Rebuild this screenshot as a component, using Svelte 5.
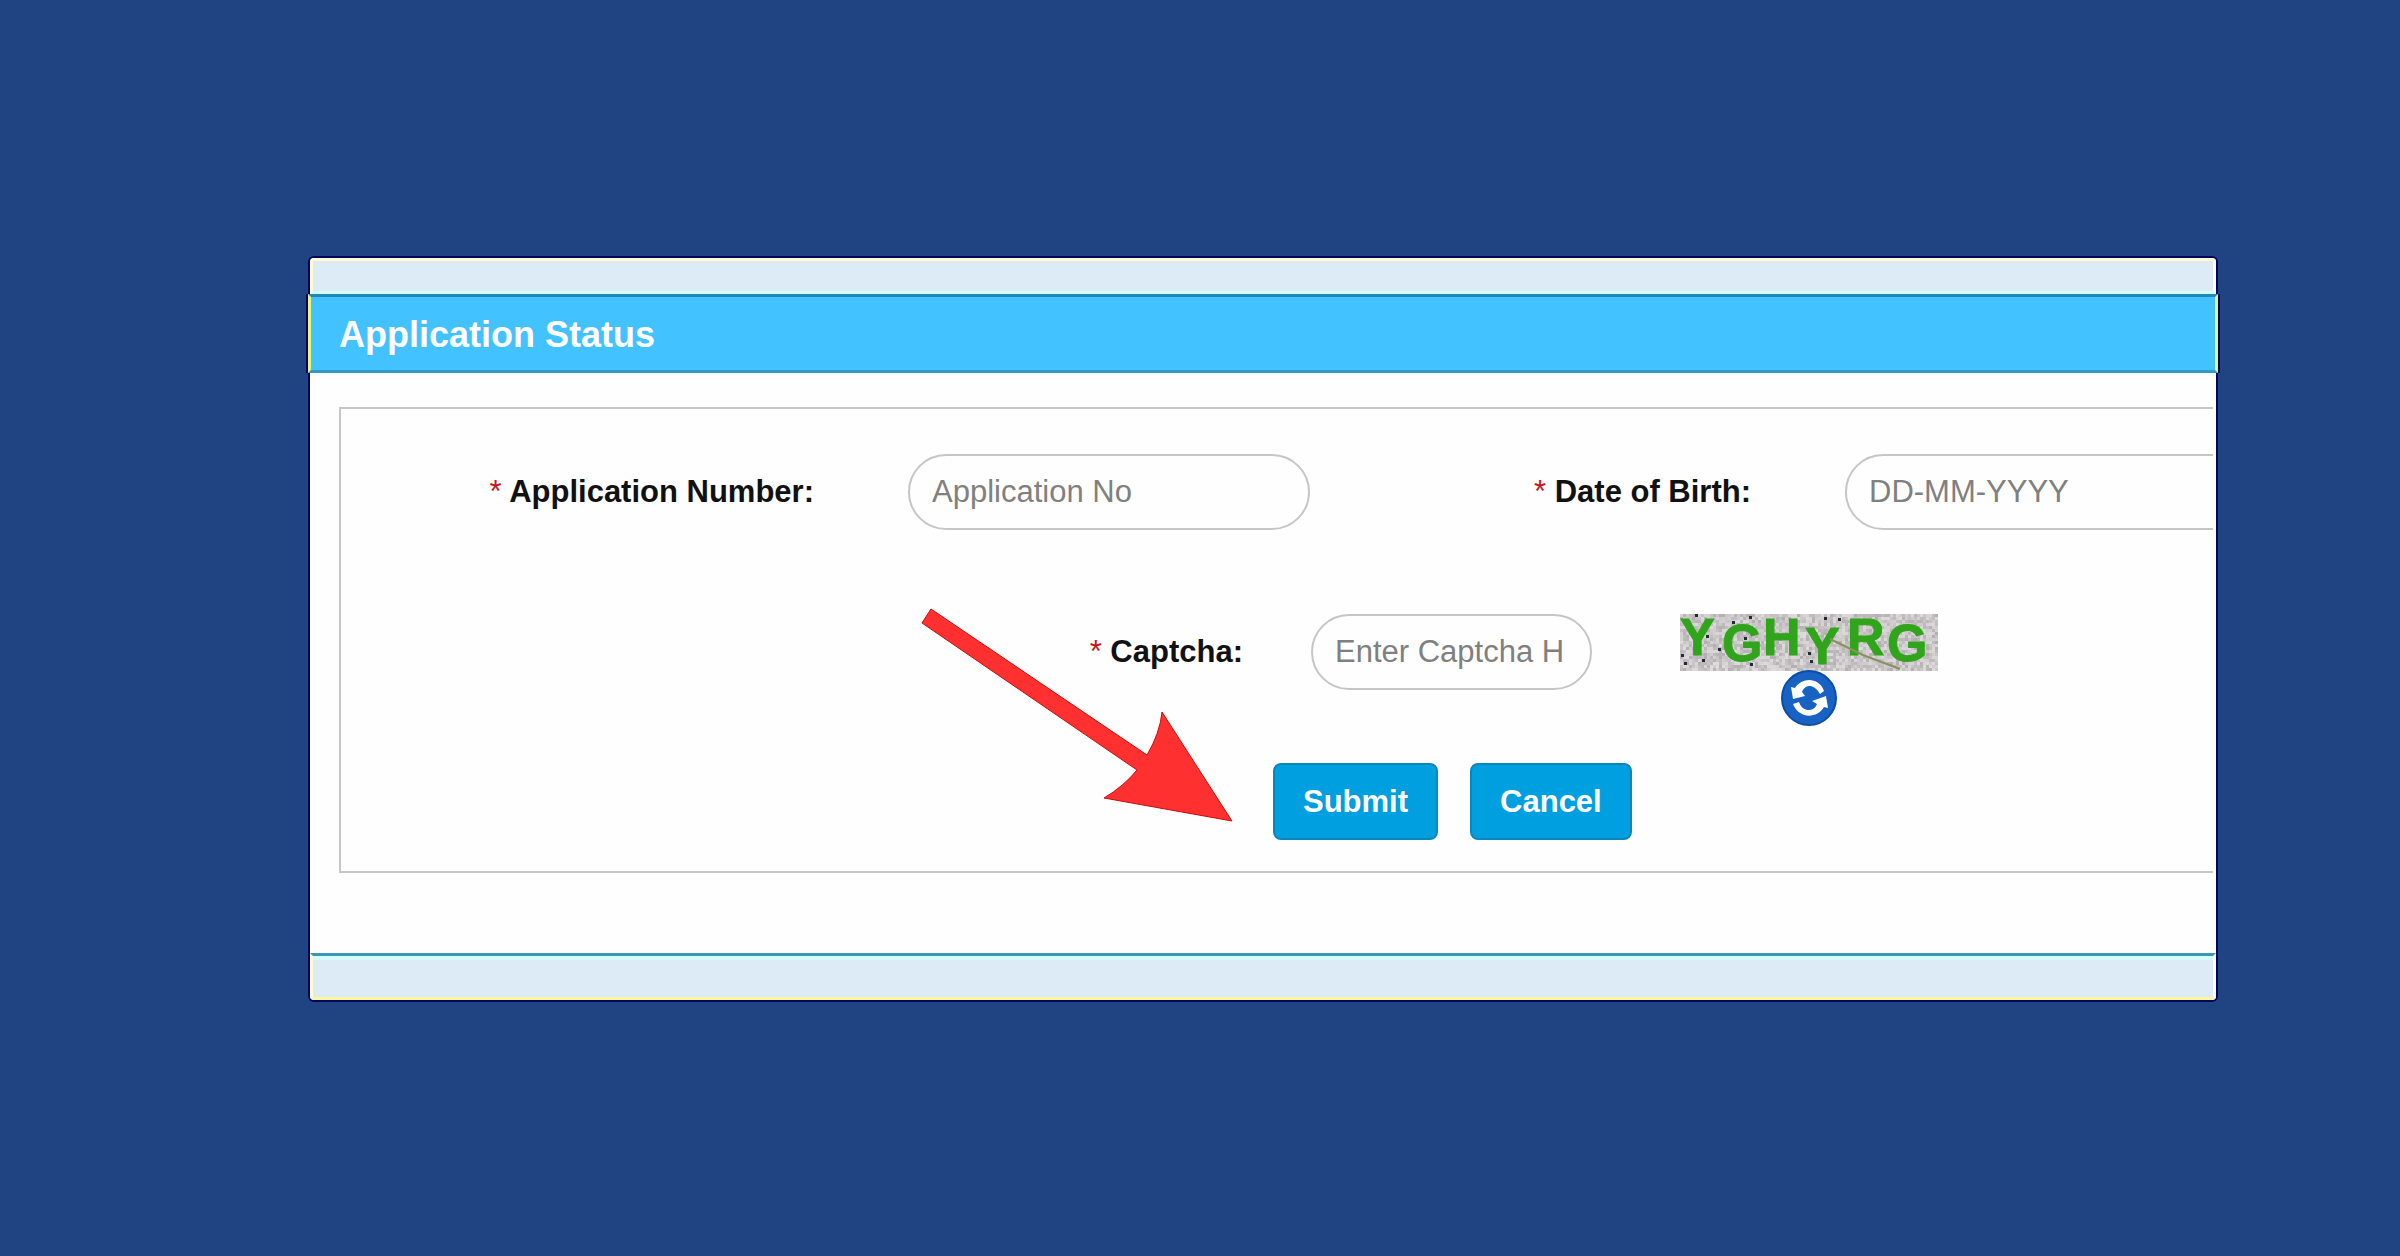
<script lang="ts">
	interface Glyph {
		char: string;
		x: number;
		y: number;
	}

	let applicationNo = $state('');
	let birthDate = $state('');
	let captcha = $state('');
	let seed = $state(7);

	const glyphs: Glyph[] = [
		{ char: 'Y', x: 0, y: 41 },
		{ char: 'G', x: 42, y: 47 },
		{ char: 'H', x: 83, y: 41 },
		{ char: 'Y', x: 125, y: 50 },
		{ char: 'R', x: 167, y: 41 },
		{ char: 'G', x: 207, y: 47 }
	];

	const specks = [
		[15, 0], [69, 2], [26, 21], [64, 23], [38, 34], [1, 40], [22, 45], [4, 48],
		[70, 49], [52, 7], [128, 38], [130, 46], [158, 4], [144, 3]
	];

	const cell = 3;

	// background grain of the captcha
	function makeGrain(start: number) {
		let n = start;
		const cells = [];
		for (let y = 0; y < 56; y += cell) {
			for (let x = 0; x < 258; x += cell) {
				n = (n * 16807) % 2147483647;
				const v = n % 44;
				cells.push({ x, y, fill: `rgb(${180 + v}, ${175 + v}, ${177 + v})` });
			}
		}
		return cells;
	}

	let grain = $derived(makeGrain(seed));

	function reset() {
		applicationNo = '';
		birthDate = '';
		captcha = '';
	}
</script>

<main class="page">
	<section class="card">
		<div class="strip"></div>
		<h1 class="title">Application Status</h1>

		<div class="body">
			<form class="panel" onsubmit={(e) => e.preventDefault()}>
				<div class="row row-details">
					<label for="application-no"><span class="required">*</span> Application Number:</label>
					<input id="application-no" type="text" placeholder="Application No" bind:value={applicationNo} />
					<label for="birth-date"><span class="required">*</span> Date of Birth:</label>
					<input id="birth-date" class="wide" type="text" placeholder="DD-MM-YYYY" bind:value={birthDate} />
				</div>

				<div class="row row-captcha">
					<label for="captcha"><span class="required">*</span> Captcha:</label>
					<input id="captcha" type="text" placeholder="Enter Captcha Here" bind:value={captcha} />
					<div class="captcha">
						<svg class="captcha-image" viewBox="0 0 258 56" role="img" aria-label="Captcha">
							{#each grain as c}
								<rect x={c.x} y={c.y} width={cell} height={cell} fill={c.fill} />
							{/each}
							{#each glyphs as g}
								<text class="glyph" x={g.x} y={g.y}>{g.char}</text>
							{/each}
							<path d="M150 25 L183 41 L220 55" fill="none" stroke="#87935f" stroke-width="2" />
							{#each specks as [x, y]}
								<rect {x} {y} width="3" height="3" fill="#202c33" />
							{/each}
						</svg>
						<button class="refresh" type="button" aria-label="Refresh captcha" onclick={() => (seed += 1)}>
							<svg viewBox="0 0 56 56">
								<circle cx="28" cy="28" r="27" fill="#1762c2" stroke="#0c4da6" stroke-width="2" />
								<g fill="#fff">
									<path d="M10 17 L14 18 C21 7 38 7 43 21 L39 24 C35 17 31 16 28 16 C25 16 22 19 21 22 L24 26 L12 29 Z" />
									<path d="M47 38 L43 37 C36 49 18 49 12 34 L18 32 C20 38 24 40 28 40 C32 40 35 37 36 34 L31 31 L45 26 Z" />
								</g>
							</svg>
						</button>
					</div>
				</div>

				<div class="row row-actions">
					<div class="actions">
						<button class="btn" type="submit">Submit</button>
						<button class="btn" type="button" onclick={reset}>Cancel</button>
					</div>
				</div>

				<svg class="pointer" viewBox="0 0 312 216" aria-hidden="true">
					<path d="M10 1 L226 147 Q239 125 241 104 L311 213 L183 190 Q203 178 216 162 L1 15 Z" />
				</svg>
			</form>
		</div>

		<div class="strip strip-bottom"></div>
	</section>
</main>

<style>
	:global(body) {
		background: #204382;
	}

	.page {
		box-sizing: border-box;
		min-height: 100vh;
		padding: 258px 184px 256px 310px;
		font-family: 'Liberation Sans', Arial, sans-serif;
		font-size: 31px;
		color: #111;
	}

	.card {
		background: #fefefe;
		border-radius: 4px;
		box-shadow: 0 0 0 2px #00055e;
	}

	.strip {
		box-sizing: border-box;
		height: 36px;
		background: #dcebf5;
		border: 3px solid #fffbd0;
		border-right-color: #fff;
		border-bottom-color: #d4fbff;
		border-radius: 4px 4px 0 0;
	}

	.title {
		box-sizing: border-box;
		height: 79px;
		margin: 0 -2px;
		padding: 0 28px;
		border: 3px solid #e8f480;
		border-top-color: #2387b8;
		border-bottom-color: #3398cb;
		background: #42c3ff;
		box-shadow: -2px 0 #00055e, 2px 0 #00055e;
		color: #fff;
		font-size: 36px;
		font-weight: bold;
		line-height: 76px;
	}

	.body {
		padding: 34px 3px 80px 29px;
	}

	.panel {
		position: relative;
		padding: 45px 0 31px;
		border: 2px solid #c6c6c6;
		border-right: 0;
		overflow: hidden;
	}

	.row {
		display: grid;
		align-items: start;
	}

	.row-details {
		grid-template-columns: 475fr 402fr 351fr 368fr;
		column-gap: 92px;
		margin-bottom: 84px;
	}

	.row-captcha {
		grid-template-columns: 904fr 281fr 555fr;
		column-gap: 66px;
		margin-bottom: 37px;
	}

	.row-actions {
		grid-template-columns: 932fr 940fr;
	}

	label {
		padding-right: 2px;
		font-weight: bold;
		line-height: 76px;
		text-align: right;
		white-space: nowrap;
	}

	.required {
		color: #c4161c;
		font-weight: normal;
	}

	input {
		box-sizing: border-box;
		width: 100%;
		height: 76px;
		padding: 0 27px 0 22px;
		border: 2px solid #c6c6c6;
		border-radius: 38px;
		background: #fefefe;
		color: #333;
		font: inherit;
	}

	input::placeholder {
		color: #808080;
		opacity: 1;
	}

	/* runs past the clipped edge of the panel */
	.wide {
		width: calc(100% + 60px);
	}

	.captcha {
		display: flex;
		flex-direction: column;
		align-items: center;
		width: 258px;
		margin-left: 22px;
	}

	.captcha-image {
		display: block;
		width: 258px;
		height: 56px;
		overflow: visible;
	}

	.glyph {
		fill: #30a51c;
		stroke: #30a51c;
		stroke-width: 1;
		font-size: 52px;
		font-weight: bold;
	}

	.refresh {
		width: 56px;
		height: 56px;
		padding: 0;
		border: 0;
		border-radius: 50%;
		background: none;
		cursor: pointer;
	}

	.refresh svg {
		display: block;
	}

	.actions {
		grid-column: 2;
		display: flex;
		gap: 32px;
	}

	.btn {
		height: 77px;
		padding: 0 28px;
		border: 2px solid #0788bd;
		border-radius: 8px;
		background: #009fe0;
		color: #fff;
		font: inherit;
		font-weight: bold;
		cursor: pointer;
	}

	.pointer {
		position: absolute;
		left: 580px;
		top: 199px;
		width: 312px;
		height: 216px;
		pointer-events: none;
	}

	.pointer path {
		fill: #ff3030;
		stroke: #c90d0d;
		stroke-width: 1;
	}

	.strip-bottom {
		height: 47px;
		border-top: 3px solid #3a98b4;
		border-bottom-color: #fff59a;
		border-radius: 0 0 4px 4px;
		box-shadow: inset 0 4px #d4fbff;
	}
</style>
